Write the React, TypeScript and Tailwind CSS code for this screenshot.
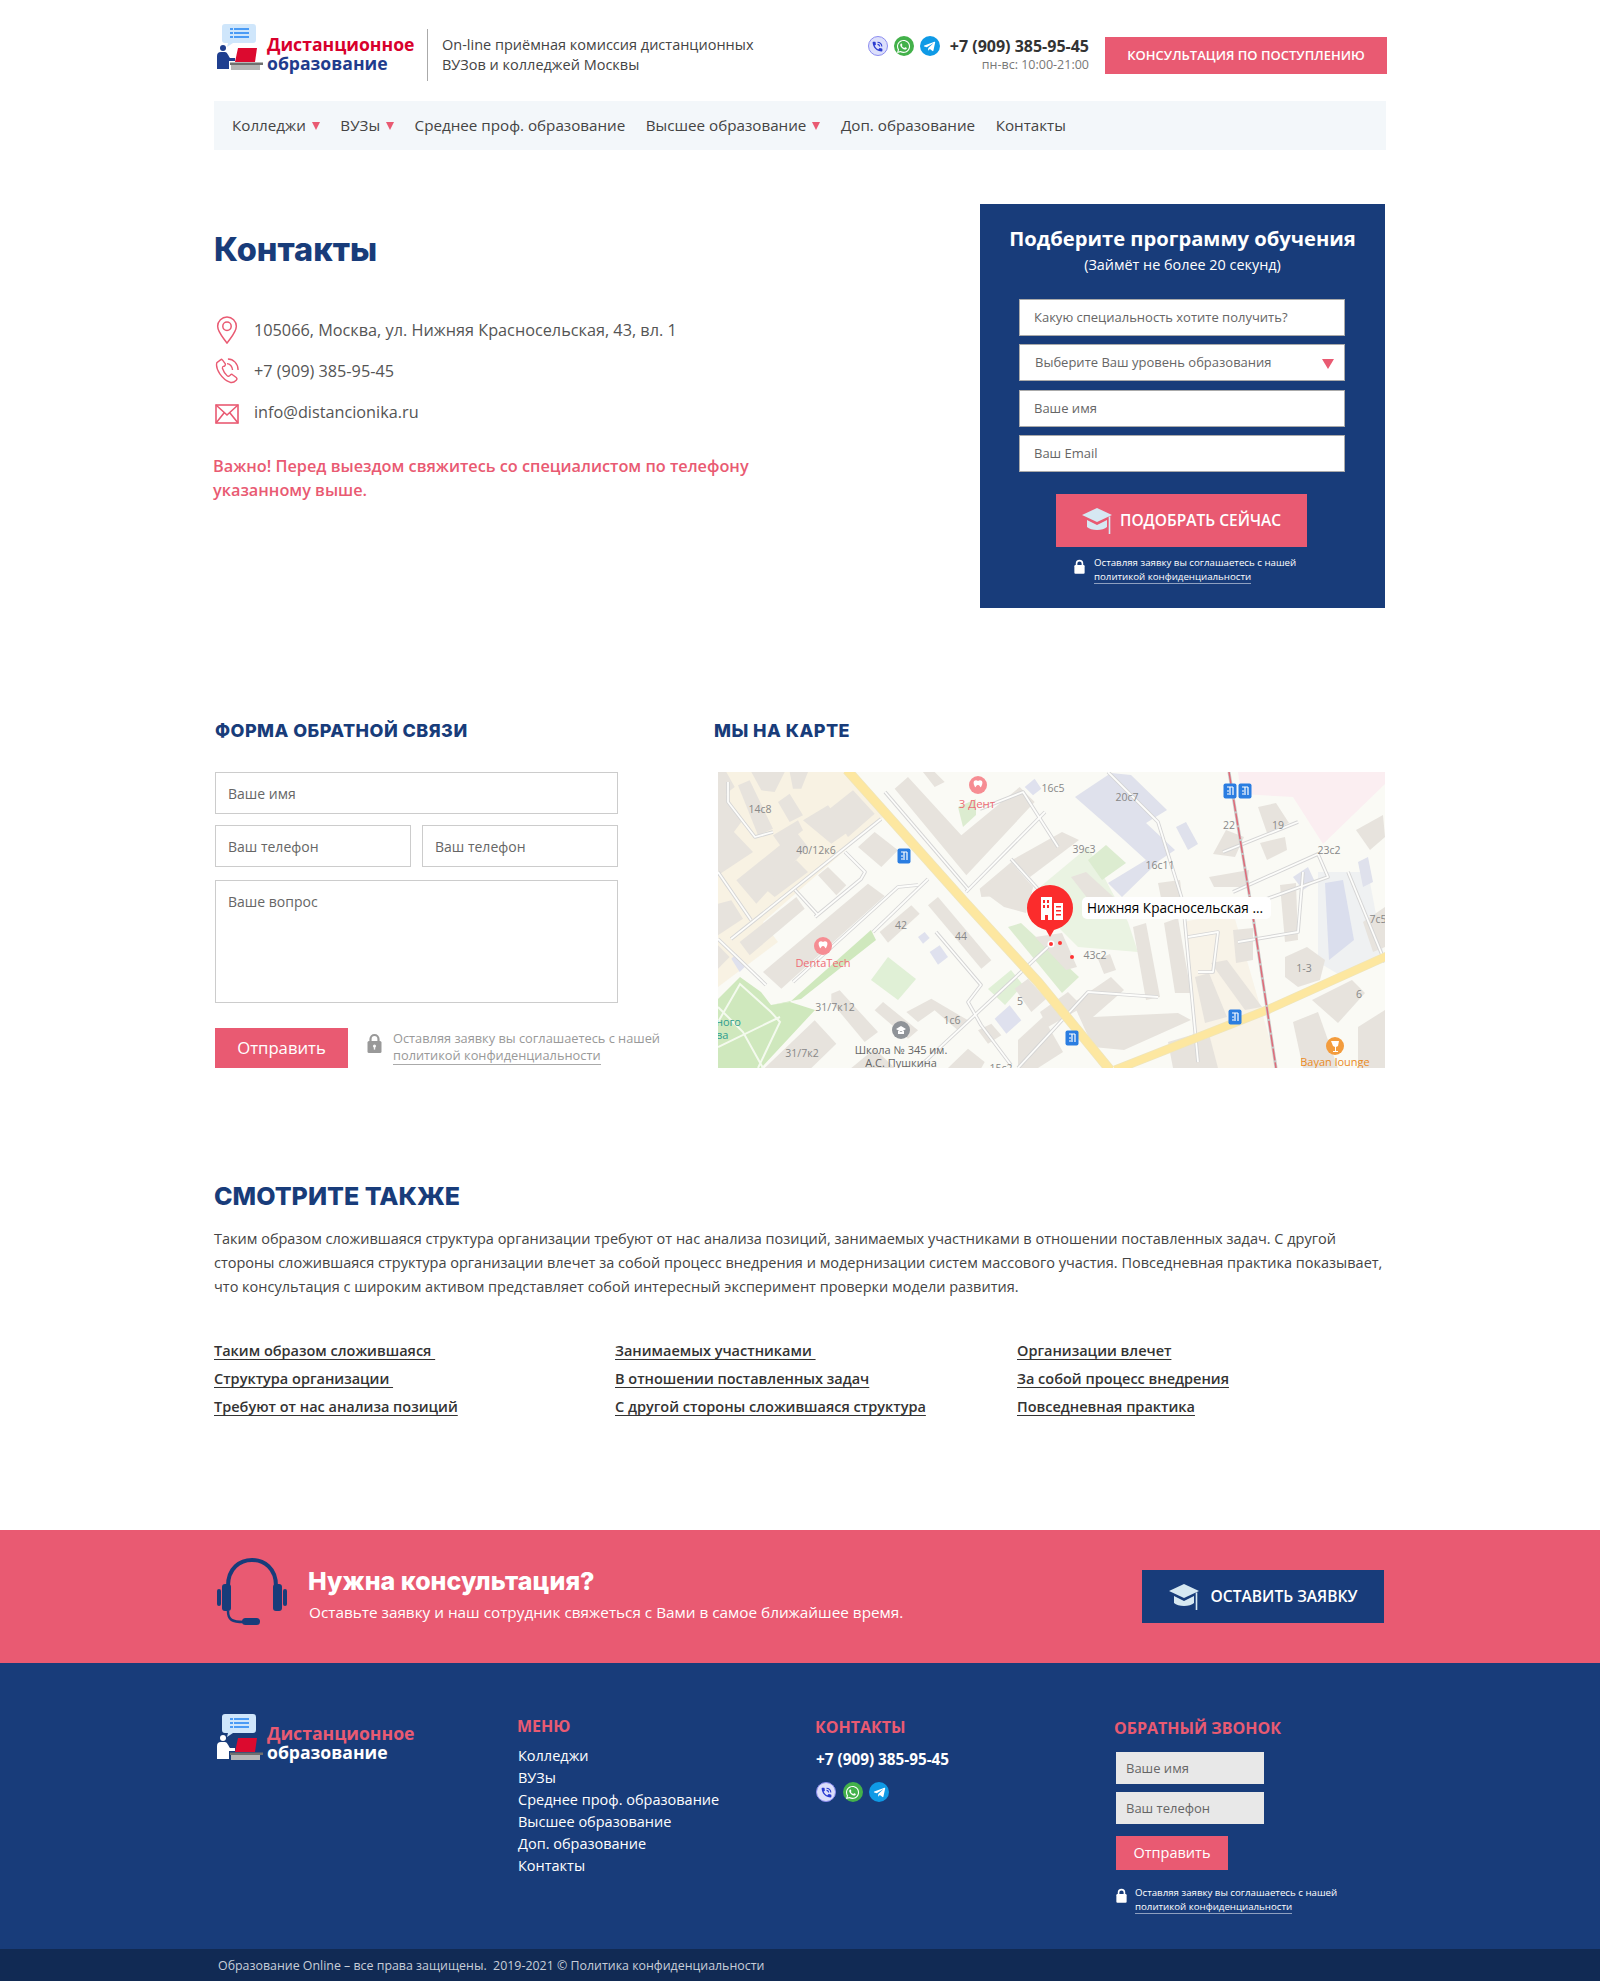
import React from "react";
import { FaWhatsapp, FaTelegramPlane } from "react-icons/fa";
import { MdPhoneInTalk } from "react-icons/md";

const Logo = ({ footer = false }: { footer?: boolean }) => {
  const person = footer ? "#ffffff" : "#1f3f8f";
  return (
    <div className="flex items-start">
      <svg width="48" height="48" viewBox="0 0 48 48" className="shrink-0">
        <path d="M8 0h28a3 3 0 0 1 3 3v13a3 3 0 0 1-3 3H16l-6 4 1-4H8a3 3 0 0 1-3-3V3a3 3 0 0 1 3-3z" fill="#cfe6fb" />
        <rect x="13" y="4" width="3" height="2" fill="#4a9bf5" />
        <rect x="17" y="4" width="15" height="2" fill="#4a9bf5" />
        <rect x="13" y="8" width="3" height="2" fill="#4a9bf5" />
        <rect x="17" y="8" width="15" height="2" fill="#4a9bf5" />
        <rect x="13" y="12" width="3" height="2" fill="#4a9bf5" />
        <rect x="17" y="12" width="15" height="2" fill="#4a9bf5" />
        <circle cx="6" cy="24" r="3" fill={person} />
        <path d="M0 32a4 4 0 0 1 4-4h4c2 0 3 3 5 6h5v3h-6v8H0z" fill={person} />
        <path d="M21 24h19l-2 14H18z" fill="#dc0a2f" />
        <rect x="13" y="38.5" width="33" height="2.5" fill="#6f6f6f" />
        <rect x="14" y="41" width="29" height="5" fill="#b5b5b5" />
      </svg>
      <div className={`ml-[2px] text-[17.600px] font-bold leading-[19px] ${footer ? "mt-[10px] text-white" : "mt-[11px] text-[#1f3c8d]"}`}>
        <div className={footer ? "text-[#e95a72]" : "text-[#d8002c]"}>Дистанционное</div>
        <div>образование</div>
      </div>
    </div>
  );
};

const Viber = () => (
  <span className="flex h-[20px] w-[20px] items-center justify-center rounded-full border border-[#8c8cf0] bg-[#dcdffb] text-[#2a3bd0]">
    <MdPhoneInTalk size={13} />
  </span>
);
const Whats = () => (
  <span className="flex h-[20px] w-[20px] items-center justify-center rounded-full bg-[#43b14a] text-white">
    <FaWhatsapp size={15} />
  </span>
);
const Tele = () => (
  <span className="flex h-[20px] w-[20px] items-center justify-center rounded-full bg-[#0f9ae6] text-white">
    <FaTelegramPlane size={13} />
  </span>
);

const Tri = () => <span className="ml-[6px] mt-[2px] inline-block h-0 w-0 border-x-[4.500px] border-t-[8px] border-x-transparent border-t-[#e95a72]" />;

const Lock = ({ className, color }: { className: string; color: string }) => (
  <svg viewBox="0 0 15 20" className={className}>
    <path d="M3.5 9V6a4 4 0 0 1 8 0v3" fill="none" stroke={color} strokeWidth="2.2" />
    <rect x="0.5" y="8" width="14" height="12" rx="1.5" fill={color} />
    <circle cx="7.5" cy="13" r="1.6" fill="#fff" fillOpacity="0.9" />
    <rect x="6.8" y="13" width="1.4" height="3.6" fill="#fff" fillOpacity="0.9" />
  </svg>
);

const Cap = ({ className }: { className: string }) => (
  <svg viewBox="0 0 32 28" className={className}>
    <path d="M15 1 30 8 15 15 0 8z" fill="#d6e8f2" />
    <path d="M5 13v7c4 4 16 4 20 0v-7l-10 5z" fill="#d6e8f2" />
    <path d="M27.500 9.500V27" stroke="#d6e8f2" strokeWidth="1.600" fill="none" />
  </svg>
);

const B = "#e7e3dd";
const leftBuildings = [
  "0,130 105,240 0,310",
  "0,0 25,0 50,45 0,85",
  "100,0 200,0 170,60 130,55",
  "55,325 235,180 270,225 115,395",
  "135,345 235,265 270,300 170,375",
  "65,510 235,375 260,410 95,550",
  "0,395 40,385 75,440 0,490",
  "0,30 25,70 70,150 40,190 0,130",
  "135,600 450,335 500,372 190,650",
  "300,310 330,285 385,340 355,370",
  "420,225 470,180 540,235 490,285",
  "60,40 95,25 165,170 120,190",
  "180,90 215,65 255,130 215,150",
  "255,145 330,100 390,180 340,215",
  "335,110 405,55 470,125 390,195",
  "165,190 240,145 255,175 190,225",
  "530,50 570,15 730,190 905,45 950,90 745,310",
  "785,350 880,270 945,345 930,400 880,370 790,375",
  "485,480 580,400 605,425 510,512",
  "630,400 660,375 820,565 790,590",
  "340,665 365,655 480,780 440,810 340,690",
  "470,715 495,690 600,775 570,800",
  "565,720 640,680 750,745 720,775 650,715 600,750",
  "140,888 290,745 355,815 280,888",
  "400,888 470,830 530,888",
  "690,888 750,830 800,870 790,888",
  "780,775 820,755 850,790 810,815",
  "890,650 930,620 985,680 940,720",
  "615,0 650,0 680,30 650,45",
  "215,0 270,0 250,50 225,50",
  "0,520 35,555 0,590",
];
const leftBlue = [
  "600,495 620,480 635,498 615,515",
  "635,540 665,520 690,555 660,578",
  "830,740 875,700 910,745 865,785",
  "920,45 950,20 970,50 945,70",
  "40,560 55,545 80,585 65,600",
];
const rightBuildings = [
  "294,88 344,60 361,68 312,105",
  "263,118 295,95 315,115 308,141 286,135",
  "317,165 344,161 359,195 348,198",
  "353,105 368,100 402,131 384,145",
  "415,155 428,151 442,225 428,228",
  "446,151 460,146 473,221 457,221",
  "440,111 462,108 464,125 444,131",
  "355,231 393,205 406,218 375,245 460,241 473,248 406,278 375,275",
  "491,105 531,98 529,115 496,115",
  "508,58 526,65 517,85 495,82",
  "540,35 558,31 571,51 549,61",
  "542,71 567,65 569,78 549,88",
  "562,113 578,111 580,168 567,170",
  "515,158 535,156 535,188 518,191",
  "477,205 491,201 509,245 487,251",
  "493,191 509,188 544,235 527,238",
  "567,185 589,175 607,188 602,208 580,215 567,205",
  "594,228 634,208 647,221 620,251",
  "638,58 665,43 667,65 652,78",
  "645,150 667,135 667,175 655,180",
  "380,187 392,182 398,198 386,202",
  "330,255 365,235 350,220 322,240",
  "300,268 325,245 345,280 320,296 300,296",
  "450,270 490,258 500,296 455,296",
  "640,255 667,238 667,296 640,296",
  "575,250 600,240 620,296 585,296",
];
const roads = [
  "0,100 33,148",
  "127,80 147,100 143,107 97,145",
  "13,167 163,47",
  "0,167 48,213",
  "75,210 180,115 200,113",
  "155,160 210,107",
  "77,118 100,143",
  "10,10 10,30 37,65 55,60",
  "167,20 250,117",
  "248,120 327,40",
  "293,87 320,117",
  "218,160 263,213 250,230 263,253 293,293",
  "262,37 305,20 340,75",
  "390,0 440,50 465,130 480,290",
  "505,80 580,50",
  "515,120 600,82 610,105 540,130",
  "520,170 580,160 585,100",
  "470,165 500,160 495,200 480,200",
  "630,100 667,190",
  "300,296 370,220 440,225",
  "200,296 330,175",
];
const labels: [number, number, string][] = [
  [42, 37, "14с8"], [98, 78, "40/12к6"], [183, 153, "42"], [243, 164, "44"], [117, 235, "31/7к12"], [234, 248, "1с6"],
  [302, 229, "5"], [335, 16, "16с5"], [409, 25, "20с7"], [366, 77, "39с3"], [442, 93, "16с11"], [511, 53, "22"], [560, 53, "19"],
  [611, 78, "23с2"], [660, 147, "7с5"], [377, 183, "43с2"], [586, 196, "1-3"], [641, 222, "6"], [84, 281, "31/7к2"], [283, 296, "15с2"],
];

const Transit = ({ x, y }: { x: number; y: number }) => (
  <g>
    <rect x={x - 6.500} y={y - 7.500} width="13" height="15" rx="2" fill="#2a7de1" />
    <path d={`M${x - 3} ${y - 4}h6M${x} ${y - 4}v8M${x - 3} ${y}h2M${x - 3} ${y + 3}h2M${x + 3} ${y - 4}v8`} stroke="#fff" strokeWidth="1.200" fill="none" />
  </g>
);

const MapView = () => (
  <svg viewBox="0 0 667 296" className="block h-[296px] w-[667px] font-['Open_Sans',sans-serif]">
    <rect width="667" height="296" fill="#fafaf5" />
    <polygon points="0,0 130,0 165,45 45,150 60,170 0,215" fill="#f8f2e3" />
    <polygon points="465,150 515,140 560,296 480,296" fill="#f8f3e8" />
    <polygon points="520,0 667,0 667,12 605,72 575,25 523,22" fill="#fbeef1" />
    <polygon points="600,100 650,100 667,190 625,205 600,190" fill="#eff1f2" />
    <polygon points="607,111 625,108 636,168 611,188" fill="#dadeed" />
    <polygon points="310,125 370,75 410,150 420,180 360,175" fill="#eaf3e2" />
    <polygon points="370,88 388,73 408,91 384,108" fill="#dcecd0" />
    <polygon points="290,155 303,151 361,205 344,221" fill="#dcecd0" />
    <polygon points="240,35 258,27 258,43 245,55" fill="#dcecd0" />
    <polygon points="0,227 22,205 43,220 53,233 72,230 97,238 43,296 0,296" fill="#cfe8bd" />
    <polygon points="53,233 72,230 153,158 158,168 83,227" fill="#cfe8bd" />
    <polygon points="153,208 170,185 198,207 180,228" fill="#e0f0d6" />
    <polygon points="270,217 293,198 305,213 287,233" fill="#e0f0d6" />
    <path d="M0 250 22 212 53 240 62 250 40 296M0 275 62 245M0 235 25 260 45 296" stroke="#f4faee" strokeWidth="2" fill="none" />
    <g transform="scale(0.33333)">
      {leftBuildings.map((p) => <polygon key={p} points={p} fill={B} />)}
      {leftBlue.map((p) => <polygon key={p} points={p} fill="#dfe1ee" />)}
    </g>
    <polygon points="357,25 393,1 413,3 449,38 428,51 457,78 442,88 404,125 390,111 428,88 406,68" fill="#dfe1ec" />
    <polygon points="458,55 468,50 480,72 470,78" fill="#dfe1ec" />
    <polygon points="575,105 590,95 597,110 585,118" fill="#dfe1ec" />
    <polygon points="640,90 650,85 655,110 645,115" fill="#dfe1ec" />
    {rightBuildings.map((p) => <polygon key={p} points={p} fill={B} />)}
    {roads.map((p) => <polyline key={p} points={p} fill="none" stroke="#d5d5d5" strokeWidth="3.600" strokeLinejoin="round" />)}
    {roads.map((p) => <polyline key={p + "i"} points={p} fill="none" stroke="#fdfdfb" strokeWidth="1.800" strokeLinejoin="round" />)}
    <polyline points="129,-2 245,128 321,211 392,298" fill="none" stroke="#efe5bb" strokeWidth="10" />
    <polyline points="129,-2 245,128 321,211 392,298" fill="none" stroke="#fde7a0" strokeWidth="8.500" />
    <polyline points="397,298 549,238 669,184" fill="none" stroke="#efe5bb" strokeWidth="9" />
    <polyline points="397,298 549,238 669,184" fill="none" stroke="#fde7a0" strokeWidth="7.500" />
    <polyline points="511,0 536,151 558,296" fill="none" stroke="#c9c9c9" strokeWidth="3" />
    <polyline points="511,0 536,151 558,296" fill="none" stroke="#e06a78" strokeWidth="1.500" strokeDasharray="12 2" />
    {labels.map(([x, y, t]) => (
      <text key={t} x={x} y={y + 4} textAnchor="middle" fontSize="10.500" fill="#888">{t}</text>
    ))}
    <circle cx="260" cy="13" r="9" fill="#f68d93" />
    <path d="M256 9c2-1.500 3-0.500 4 0 1-.5 2-1.500 4 0 1 2 0 4-1 6-1 1-1-2-3-2s-2 3-3 2c-1-2-2-4-1-6z" fill="#fff" />
    <text x="259" y="36" textAnchor="middle" fontSize="11.500" fill="#ee6d75">3 Дент</text>
    <circle cx="105" cy="174" r="9" fill="#f68d93" />
    <path d="M101 170c2-1.500 3-0.500 4 0 1-.5 2-1.500 4 0 1 2 0 4-1 6-1 1-1-2-3-2s-2 3-3 2c-1-2-2-4-1-6z" fill="#fff" />
    <text x="105" y="195" textAnchor="middle" fontSize="11" fill="#ee6d75">DentaTech</text>
    <circle cx="183" cy="258" r="9" fill="#8f9398" />
    <path d="M178 257l5-3 5 3-5 3zM180 259v3h6v-3" fill="#fff" />
    <text x="183" y="282" textAnchor="middle" fontSize="11" fill="#666">Школа № 345 им.</text>
    <text x="183" y="295" textAnchor="middle" fontSize="11" fill="#666">А.С. Пушкина</text>
    <text x="-2" y="254" fontSize="11" fill="#2d9d8f">ного</text>
    <text x="-2" y="267" fontSize="11" fill="#2d9d8f">ва</text>
    <circle cx="617" cy="274" r="9" fill="#f39c3d" />
    <path d="M613 269h8l-1 5-2 1v4h2v1h-5v-1h2v-4l-2-1z" fill="#fff" />
    <text x="617" y="294" textAnchor="middle" fontSize="11" fill="#ea8a24">Bayan lounge</text>
    <Transit x={512} y={19} />
    <Transit x={527} y={19} />
    <Transit x={186} y={84} />
    <Transit x={517} y={245} />
    <Transit x={354} y={266} />
    <circle cx="333" cy="172" r="3.500" fill="#fff" />
    <circle cx="333" cy="172" r="2" fill="#f33" />
    <circle cx="342" cy="171" r="2" fill="#f33" />
    <circle cx="354" cy="185" r="2" fill="#f33" />
    <rect x="364" y="125" width="189" height="22" rx="5" fill="#fff" />
    <text x="369" y="141" fontSize="13.600" fill="#000">Нижняя Красносельская ...</text>
    <path d="M332 165l-4-7C316 155 309 146 309 136a23 23 0 0 1 46 0c0 10-7 19-19 22z" fill="#fb2c2c" />
    <path d="M323 125h11v23h-4v-5h-3v5h-4zM336 131h9v17h-9z" fill="#fff" />
    <path d="M325 128h2v3h-2zM329 128h2v3h-2zM325 133h2v3h-2zM329 133h2v3h-2zM338 134h5v1.500h-5zM338 138h5v1.500h-5zM338 142h5v1.500h-5z" fill="#fb2c2c" />
  </svg>
);

const inputBase = "block w-full bg-white outline-none placeholder:text-[#666]";
const formInput = `${inputBase} h-[42px] border border-[#cccccc] px-[12px] text-[14px]`;
const panelInput = `${inputBase} h-[37px] border border-[#aaaaaa] px-[14px] pb-[2px] text-[13px]`;
const footInput = "block h-[32px] w-[148px] bg-[#e8e8e8] px-[10px] text-[13px] outline-none placeholder:text-[#666]";

const Policy = ({ className = "" }: { className?: string }) => (
  <div className={`text-[9.700px] leading-[13.500px] text-white ${className}`}>
    Оставляя заявку вы соглашаетесь с нашей
    <br />
    <span className="border-b border-[#8ea0c0]">политикой конфиденциальности</span>
  </div>
);

const links = [
  ["Таким образом сложившаяся\u00a0", "Структура организации\u00a0", "Требуют от нас анализа позиций"],
  ["Занимаемых участниками\u00a0", "В отношении поставленных задач", "С другой стороны сложившаяся структура"],
  ["Организации влечет", "За собой процесс внедрения", "Повседневная практика"],
];

export default function App() {
  return (
    <div className="bg-white font-['Open_Sans',sans-serif] text-[#444]">
      <div className="mx-auto w-[1172px]">
        <header className="flex h-[101px] items-start">
          <div className="ml-[3px] mt-[24px] w-[210px]"><Logo /></div>
          <div className="mt-[29px] h-[52px] w-px bg-[#aaa]" />
          <div className="ml-[14px] mt-[35px] text-[14.500px] leading-[20px] text-[#444]">
            On-line приёмная комиссия дистанционных
            <br />
            ВУЗов и колледжей Москвы
          </div>
          <div className="ml-auto mt-[36px] flex gap-[6px]">
            <Viber /><Whats /><Tele />
          </div>
          <div className="ml-[10px] mt-[36px] text-right">
            <div className="text-[16px] font-bold leading-[21px] text-[#333]">+7 (909) 385-95-45</div>
            <div className="text-[12.500px] leading-[16px] text-[#777]">пн-вс: 10:00-21:00</div>
          </div>
          <button className="ml-[16px] mr-[-1px] mt-[37px] h-[37px] w-[282px] bg-[#e95a72] text-[13px] font-semibold text-white">КОНСУЛЬТАЦИЯ ПО ПОСТУПЛЕНИЮ</button>
        </header>

        <nav className="flex h-[49px] items-center gap-[20.500px] bg-[#f3f7fa] pl-[18px] text-[15.200px] text-[#444]">
          <span className="flex items-center">Колледжи<Tri /></span>
          <span className="flex items-center">ВУЗы<Tri /></span>
          <span>Среднее проф. образование</span>
          <span className="flex items-center">Высшее образование<Tri /></span>
          <span>Доп. образование</span>
          <span>Контакты</span>
        </nav>

        <section className="mt-[54px] flex items-start justify-between">
          <div>
            <h1 className="mt-[24px] font-['Inter',sans-serif] text-[32.500px] font-extrabold leading-[44px] text-[#183c7a]">Контакты</h1>
            <div className="mt-[46px] flex flex-col gap-[17px] pl-[1px] text-[16.250px] text-[#555]">
              <div className="flex h-[24px] items-center">
                <svg viewBox="0 0 24 30" className="h-[28px] w-[24px] shrink-0" fill="none" stroke="#e95a72" strokeWidth="1.600">
                  <path d="M12 29C7 22 2 17 2 11a10 10 0 0 1 20 0c0 6-5 11-10 18z" />
                  <circle cx="12" cy="11" r="4.500" />
                </svg>
                <span className="ml-[15px]">105066, Москва, ул. Нижняя Красносельская, 43, вл. 1</span>
              </div>
              <div className="flex h-[24px] items-center">
                <svg viewBox="0 0 26 28" className="h-[26px] w-[24px] shrink-0" fill="none" stroke="#e95a72" strokeWidth="1.500">
                  <path d="M6 2 2 5C0 12 8 23 16 26c2 1 5 0 7-2 1-1 1-2 0-3l-4-3c-1-1-2 0-3 1s-2 1-3 0c-2-2-4-5-5-8 0-1 0-2 1-2s3-1 2-3L8 2C7 1 7 1 6 2z" />
                  <path d="M13 6c3 0 6 3 6 7M14 1c6 0 11 5 11 12" />
                </svg>
                <span className="ml-[15px]">+7 (909) 385-95-45</span>
              </div>
              <div className="flex h-[24px] items-center">
                <svg viewBox="0 0 24 20" className="mt-[4px] h-[20px] w-[24px] shrink-0" fill="none" stroke="#e95a72" strokeWidth="1.600">
                  <rect x="1" y="1" width="22" height="18" />
                  <path d="M1 1l11 10L23 1M1 19l8-10M23 19l-8-10" />
                </svg>
                <span className="ml-[15px]">info@distancionika.ru</span>
              </div>
            </div>
            <p className="ml-[-1px] mt-[30px] w-[560px] text-[16.300px] font-semibold leading-[24px] text-[#e95a72]">
              Важно! Перед выездом свяжитесь со специалистом по телефону указанному выше.
            </p>
          </div>

          <aside className="mr-px h-[404px] w-[405px] bg-[#183c7a] pt-[21px]">
            <h2 className="text-center text-[20.200px] font-bold leading-[27px] text-white">Подберите программу обучения</h2>
            <p className="mt-[1px] text-center text-[14.400px] leading-[24px] text-white">(Займёт не более 20 секунд)</p>
            <div className="ml-[39px] mt-[22px] w-[326px]">
              <input className={`${panelInput} mb-[8px]`} placeholder="Какую специальность хотите получить?" />
              <div className="relative mb-[9px]">
                <select className={`${inputBase} h-[37px] appearance-none border border-[#aaaaaa] px-[15px] text-[13px] text-[#666]`} defaultValue="">
                  <option value="">Выберите Ваш уровень образования</option>
                </select>
                <span className="absolute right-[11px] top-[15px] h-0 w-0 border-x-[6px] border-t-[10px] border-x-transparent border-t-[#e95a72]" />
              </div>
              <input className={`${panelInput} mb-[8px]`} placeholder="Ваше имя" />
              <input className={panelInput} placeholder="Ваш Email" />
            </div>
            <button className="ml-[76px] mt-[22px] flex h-[53px] w-[251px] items-center justify-center bg-[#e95a72] text-[15.500px] font-semibold text-white">
              <Cap className="mr-[6px] h-[28px] w-[32px]" />
              ПОДОБРАТЬ СЕЙЧАС
            </button>
            <div className="ml-[94px] mt-[9px] flex items-start">
              <Lock className="mr-[9px] mt-[3px] h-[15px] w-[11px]" color="#fff" />
              <Policy />
            </div>
          </aside>
        </section>

        <section className="mt-[111px] flex items-start">
          <div className="w-[500px] pl-px">
            <h3 className="font-['Inter',sans-serif] text-[18px] font-extrabold leading-[24px] tracking-[0.450px] text-[#183c7a]">ФОРМА ОБРАТНОЙ СВЯЗИ</h3>
            <div className="mt-[29px] w-[403px]">
              <input className={formInput} placeholder="Ваше имя" />
              <div className="mt-[11px] flex gap-[11px]">
                <input className={formInput} placeholder="Ваш телефон" />
                <input className={formInput} placeholder="Ваш телефон" />
              </div>
              <textarea className={`${inputBase} mt-[13px] h-[123px] resize-none border border-[#cccccc] px-[12px] py-[10px] text-[14px]`} placeholder="Ваше вопрос" />
            </div>
            <div className="mt-[25px] flex items-start">
              <button className="h-[40px] w-[133px] bg-[#e95a72] text-[16.700px] text-white">Отправить</button>
              <Lock className="ml-[19px] mt-[5px] h-[20px] w-[15px]" color="#999" />
              <div className="ml-[11px] mt-[2px] text-[12.800px] leading-[17px] text-[#999]">
                Оставляя заявку вы соглашаетесь с нашей
                <br />
                <span className="border-b border-[#aaa]">политикой конфиденциальности</span>
              </div>
            </div>
          </div>
          <div className="flex-1">
            <h3 className="font-['Inter',sans-serif] text-[18px] font-extrabold leading-[24px] tracking-[0.450px] text-[#183c7a]">МЫ НА КАРТЕ</h3>
            <div className="ml-[4px] mt-[29px] overflow-hidden"><MapView /></div>
          </div>
        </section>

        <section className="mt-[110px]">
          <h2 className="font-['Inter',sans-serif] text-[25px] font-extrabold leading-[36px] text-[#183c7a]">СМОТРИТЕ ТАКЖЕ</h2>
          <p className="mt-[13px] text-[14.500px] leading-[24px] text-[#444]">
            Таким образом сложившаяся структура организации требуют от нас анализа позиций, занимаемых участниками в отношении поставленных задач. С другой стороны сложившаяся структура организации влечет за собой процесс внедрения и модернизации систем массового участия. Повседневная практика показывает, что консультация с широким активом представляет собой интересный эксперимент проверки модели развития.
          </p>
          <div className="mt-[42px] grid grid-cols-[401px_402px_1fr]">
            {links.map((col, i) => (
              <div key={i} className="flex flex-col gap-[8px]">
                {col.map((l) => (
                  <a key={l} className="text-[14.500px] font-semibold leading-[20px] text-[#333] underline underline-offset-[3px]">{l}</a>
                ))}
              </div>
            ))}
          </div>
        </section>
      </div>

      <section className="mt-[113px] h-[133px] bg-[#e95a72]">
        <div className="mx-auto flex h-full w-[1172px] items-start">
          <svg viewBox="0 0 72 68" className="ml-[2px] mt-[28px] h-[68px] w-[72px] shrink-0" fill="none">
            <path d="M12 28C12 10 24 2 36 2s24 8 24 26" stroke="#183c7a" strokeWidth="4" />
            <rect x="6" y="26" width="9" height="27" rx="3" fill="#183c7a" />
            <rect x="1" y="31" width="4" height="17" rx="2" fill="#183c7a" />
            <rect x="57" y="26" width="9" height="27" rx="3" fill="#183c7a" />
            <rect x="67" y="31" width="4" height="17" rx="2" fill="#183c7a" />
            <path d="M12 53c0 9 4 11 16 11" stroke="#183c7a" strokeWidth="2.500" />
            <rect x="26" y="60" width="18" height="7" rx="3.500" fill="#183c7a" />
          </svg>
          <div className="ml-[20px] mt-[34px] text-white">
            <h2 className="font-['Inter',sans-serif] text-[25px] font-extrabold leading-[34px]">Нужна консультация?</h2>
            <p className="ml-px mt-[2px] text-[15.300px] leading-[24px]">Оставьте заявку и наш сотрудник свяжеться с Вами в самое ближайшее время.</p>
          </div>
          <button className="ml-auto mr-[2px] mt-[40px] flex h-[53px] w-[242px] items-center justify-center bg-[#183c7a] text-[15.600px] font-semibold text-white">
            <Cap className="mr-[10px] h-[28px] w-[32px]" />
            ОСТАВИТЬ ЗАЯВКУ
          </button>
        </div>
      </section>

      <footer className="h-[286px] bg-[#183c7a] text-white">
        <div className="mx-auto flex w-[1172px] items-start">
          <div className="ml-[3px] mt-[51px] w-[300px]"><Logo footer /></div>
          <div className="mt-[52px] w-[298px]">
            <h4 className="text-[16px] font-bold leading-[22px] text-[#e95a72]">МЕНЮ</h4>
            <ul className="ml-px mt-[8px] text-[14.500px] leading-[22px]">
              <li>Колледжи</li>
              <li>ВУЗы</li>
              <li>Среднее проф. образование</li>
              <li>Высшее образование</li>
              <li>Доп. образование</li>
              <li>Контакты</li>
            </ul>
          </div>
          <div className="mt-[53px] w-[299px]">
            <h4 className="text-[16px] font-bold leading-[22px] text-[#e95a72]">КОНТАКТЫ</h4>
            <div className="ml-px mt-[10px] text-[15.300px] font-bold leading-[22px]">+7 (909) 385-95-45</div>
            <div className="ml-px mt-[12px] flex gap-[6.500px]"><Viber /><Whats /><Tele /></div>
          </div>
          <div className="mt-[54px]">
            <h4 className="text-[16px] font-bold leading-[22px] text-[#e95a72]">ОБРАТНЫЙ ЗВОНОК</h4>
            <div className="ml-[2px]">
              <input className={`${footInput} mt-[13px]`} placeholder="Ваше имя" />
              <input className={`${footInput} mt-[8px]`} placeholder="Ваш телефон" />
              <button className="mt-[12px] h-[34px] w-[112px] bg-[#e95a72] text-[14.500px] text-white">Отправить</button>
              <div className="mt-[16px] flex items-start">
                <Lock className="mr-[8px] mt-[2px] h-[15px] w-[11px]" color="#fff" />
                <Policy />
              </div>
            </div>
          </div>
        </div>
      </footer>

      <div className="h-[32px] bg-[#112a54]">
        <div className="mx-auto w-[1172px] pl-[4px] text-[12.400px] leading-[33px] text-[#c8ced9]">Образование Online – все права защищены.&nbsp; 2019-2021 © Политика конфиденциальности</div>
      </div>
    </div>
  );
}
